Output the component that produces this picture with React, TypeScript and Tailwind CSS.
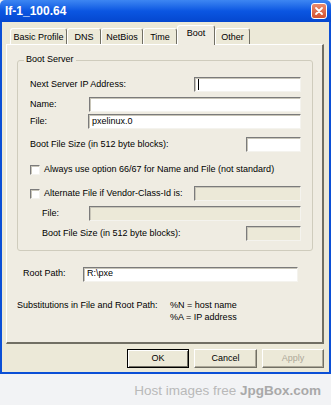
import React from 'react';

const face = 'bg-[#ece9d8]';

function Field({ w, value, disabled, caret }: { w: string; value?: string; disabled?: boolean; caret?: boolean }) {
  return (
    <div
      className={`${w} h-[15px] flex items-center pl-[3px] border border-t-[#7b7b7b] border-l-[#7b7b7b] border-b-[#f4f3ee] border-r-[#f4f3ee] shadow-[inset_1px_1px_0_#c8c5b8] ${
        disabled ? 'bg-[#ece9d8]' : 'bg-white'
      }`}
    >
      {caret && <span className="w-px h-[11px] bg-black" />}
      {value}
    </div>
  );
}

function Check() {
  return (
    <span className="w-[10px] h-[10px] bg-white border border-t-[#7b7b7b] border-l-[#7b7b7b] border-b-[#f4f3ee] border-r-[#f4f3ee] shadow-[inset_1px_1px_0_#c8c5b8]" />
  );
}

function Tab({ label, w, active }: { label: string; w: string; active?: boolean }) {
  return (
    <div
      className={`${w} flex justify-center rounded-t-[3px] border-t border-l border-r border-t-white border-l-white border-r-[#716f64] ${
        active ? 'h-[20px] relative z-10 bg-[#efece2] pt-[3px]' : 'h-[17px] pt-[4px]'
      }`}
    >
      {label}
    </div>
  );
}

function Btn({ label, kind }: { label: string; kind: 'default' | 'normal' | 'disabled' }) {
  const cls =
    kind === 'default'
      ? 'border border-black shadow-[inset_1px_1px_0_#fff,inset_-1px_-1px_0_#716f64]'
      : 'border border-t-white border-l-white border-b-[#716f64] border-r-[#716f64] shadow-[inset_-1px_-1px_0_#aca899]';
  return (
    <div
      className={`h-[19px] flex items-center justify-center ${face} ${cls} ${
        kind === 'disabled' ? 'w-[62px] text-[#aca899]' : kind === 'default' ? 'w-[62px]' : 'w-[63px]'
      }`}
    >
      {label}
    </div>
  );
}

export default function App() {
  return (
    <div className="w-[331px] h-[405px] flex flex-col bg-[#f2f3f5] font-['Liberation_Sans',Arial,sans-serif]">
      {/* Window */}
      <div className="h-[374px] flex flex-col">
        {/* Title bar */}
        <div className="h-[22px] flex items-center pl-[5px] pr-[4px] bg-gradient-to-b from-[#3d86f2] via-[#0b56e2] to-[#0547cf] rounded-t-[5px]">
          <span className="text-white font-bold text-[12px] leading-none">If-1_100.64</span>
          <div className="ml-auto w-[16px] h-[16px] rounded-[3px] border border-white bg-gradient-to-b from-[#e98a6c] to-[#d4512f] flex items-center justify-center">
            <svg width="10" height="10" viewBox="0 0 10 10">
              <path d="M2 2 L8 8 M8 2 L2 8" stroke="white" strokeWidth="1.8" strokeLinecap="round" />
            </svg>
          </div>
        </div>

        {/* Body */}
        <div className={`flex-1 flex flex-col ${face} border-l-2 border-r-2 border-b-2 border-[#0b4fd6] pt-[3px] pl-[4px] pr-[5px] text-[9px] text-black`}>
          {/* Tabs */}
          <div className="h-[20px] flex items-end pl-[4px] leading-none">
            <Tab label="Basic Profile" w="w-[57px]" />
            <Tab label="DNS" w="w-[34px]" />
            <Tab label="NetBios" w="w-[42px]" />
            <Tab label="Time" w="w-[34px]" />
            <Tab label="Boot" w="w-[38px]" active />
            <Tab label="Other" w="w-[35px]" />
          </div>

          {/* Tab page */}
          <div className="h-[300px] -mt-px flex flex-col bg-[#efece2] border-t border-l border-t-white border-l-white border-b-2 border-r-2 border-b-[#716f64] border-r-[#716f64]">
            {/* Boot Server group */}
            <div className="relative mt-[15px] ml-[10px] w-[296px] h-[191px] border border-[#cfccbd] rounded-[3px] flex flex-col pl-[12px] pr-[11px]">
              <span className="absolute -top-[6px] left-[6px] px-[2px] bg-[#efece2] leading-none">Boot Server</span>

              <div className="mt-[16px] h-[15px] flex items-center justify-between">
                <span>Next Server IP Address:</span>
                <Field w="w-[107px]" caret />
              </div>
              <div className="mt-[5px] h-[15px] flex items-center justify-between">
                <span>Name:</span>
                <Field w="w-[212px]" />
              </div>
              <div className="mt-[2px] h-[15px] flex items-center justify-between">
                <span>File:</span>
                <Field w="w-[213px]" value="pxelinux.0" />
              </div>
              <div className="mt-[8px] h-[15px] flex items-center justify-between">
                <span>Boot File Size (in 512 byte blocks):</span>
                <Field w="w-[55px]" />
              </div>

              <div className="mt-[10px] h-[15px] flex items-center gap-[4px]">
                <Check />
                <span>Always use option 66/67 for Name and File (not standard)</span>
              </div>

              <div className="mt-[9px] h-[15px] flex items-center justify-between">
                <div className="flex items-center gap-[4px]">
                  <Check />
                  <span>Alternate File if Vendor-Class-Id is:</span>
                </div>
                <Field w="w-[107px]" disabled />
              </div>
              <div className="mt-[5px] h-[15px] flex items-center justify-between pl-[12px]">
                <span>File:</span>
                <Field w="w-[212px]" disabled />
              </div>
              <div className="mt-[5px] h-[15px] flex items-center justify-between pl-[12px]">
                <span>Boot File Size (in 512 byte blocks):</span>
                <Field w="w-[55px]" disabled />
              </div>
            </div>

            {/* Root path */}
            <div className="mt-[15px] ml-[16px] h-[16px] flex items-center">
              <span className="w-[60px]">Root Path:</span>
              <Field w="w-[215px]" value="R:\pxe" />
            </div>

            {/* Substitutions */}
            <div className="mt-[17px] ml-[10px] flex leading-[12px]">
              <span className="w-[153px]">Substitutions in File and Root Path:</span>
              <div className="flex flex-col">
                <span>%N = host name</span>
                <span>%A = IP address</span>
              </div>
            </div>
          </div>

          {/* Buttons */}
          <div className="mt-[5px] flex justify-end gap-[5px]">
            <Btn label="OK" kind="default" />
            <Btn label="Cancel" kind="normal" />
            <Btn label="Apply" kind="disabled" />
          </div>
        </div>
      </div>

      {/* Watermark */}
      <div className="flex-1 flex justify-end pr-[10px] pt-[9px] text-[13.5px] leading-[16px] whitespace-pre">
        <span className="text-[#b9b9b9]">Host images free </span>
        <span className="text-[#a9a9a9] font-bold">JpgBox.com</span>
      </div>
    </div>
  );
}
